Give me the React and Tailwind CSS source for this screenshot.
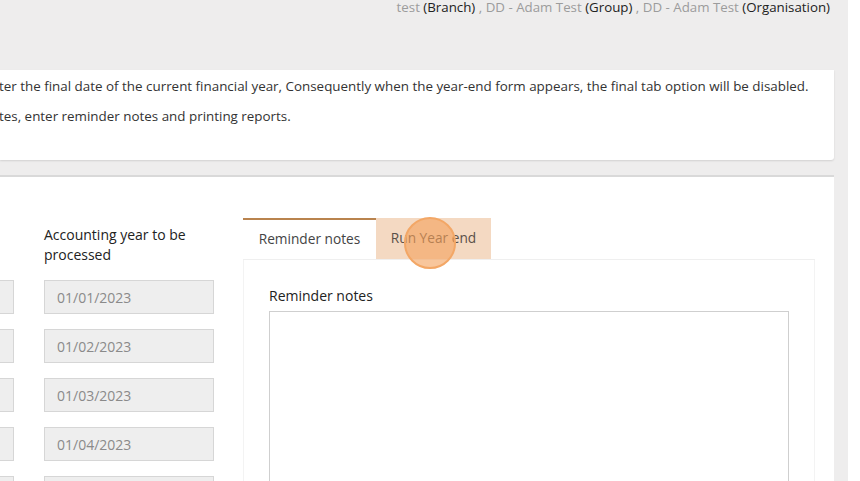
import React from 'react';

const font = { fontFamily: '"Open Sans", "Liberation Sans", sans-serif' };

const dates = ['01/01/2023', '01/02/2023', '01/03/2023', '01/04/2023', '01/05/2023'];

const DateInput = ({ value }) => (
  <div className="h-[34px] w-full border border-[#d6d6d6] bg-[#eeeeee] px-[12px] flex items-center text-[14px] text-[#8a8a8a]">
    {value}
  </div>
);

export default function App() {
  return (
    <div className="w-[860px] h-[481px] overflow-hidden flex bg-[#eeeded]" style={font}>
      <div className="w-[848px] flex flex-col">
        {/* org breadcrumb */}
        <div className="h-[70px] shrink-0 pr-[18px] text-right text-[13.3px] leading-[15px] text-[#9c9c9c]">
          test <span className="text-[#222]">(Branch)</span> , DD - Adam Test{' '}
          <span className="text-[#222]">(Group)</span> , DD - Adam Test{' '}
          <span className="text-[#222]">(Organisation)</span>
        </div>

        {/* info card */}
        <div className="shrink-0 mr-[14px] h-[90px] bg-white rounded-br-[3px] shadow-[0_1px_2px_rgba(0,0,0,0.12)] pt-[6px] text-[13.4px] leading-[20px] text-[#333]">
          <p className="mb-[10px] -ml-[1px]">
            ter the final date of the current financial year, Consequently when the year-end form appears, the final tab option will be disabled.
          </p>
          <p className="-ml-[1px]">tes, enter reminder notes and printing reports.</p>
        </div>

        {/* main card */}
        <div className="shrink-0 mt-[15px] mr-[14px] h-[400px] bg-white border-t-2 border-[#d9d9d9] flex items-start">
          <div className="w-[170px] -ml-[156px] pt-[48px] shrink-0">
            <div className="h-[40px] text-[14px] leading-[20px] text-[#222]">Period</div>
            <div className="mt-[15px] flex flex-col gap-[15px]">
              {dates.map((d) => (
                <DateInput key={d} value="" />
              ))}
            </div>
          </div>

          <div className="w-[170px] ml-[30px] pt-[48px] shrink-0">
            <div className="h-[40px] text-[14px] leading-[20px] text-[#222]">
              Accounting year to be processed
            </div>
            <div className="mt-[15px] flex flex-col gap-[15px]">
              {dates.map((d) => (
                <DateInput key={d} value={d} />
              ))}
            </div>
          </div>

          <div className="ml-[29px] w-[572px] mt-[41px] shrink-0">
            <div className="relative flex h-[42px] border-b border-[#efefef]">
              <div className="w-[133px] border-t-2 border-[#b9834e] flex items-center justify-center text-[13.7px] text-[#444] pb-[1px]">
                Reminder notes
              </div>
              <div className="w-[115px] bg-[#f4d9c2] flex items-center justify-center text-[13.7px] text-[#5a5048]">
                Run Year end
              </div>
              <div className="absolute left-[161px] top-[-1px] w-[52px] h-[52px] rounded-full bg-[rgba(243,160,90,0.6)] border-2 border-[#f3a766]" />
            </div>
            <div className="border-l border-r border-[#f3f3f3] h-[260px] pl-[25px] pt-[26px]">
              <div className="text-[14px] leading-[20px] text-[#222] font-medium">Reminder notes</div>
              <div className="mt-[5px] w-[520px] h-[200px] border border-[#cfcfcf] bg-white" />
            </div>
          </div>
        </div>
      </div>
      <div className="w-[12px] bg-white" />
    </div>
  );
}
